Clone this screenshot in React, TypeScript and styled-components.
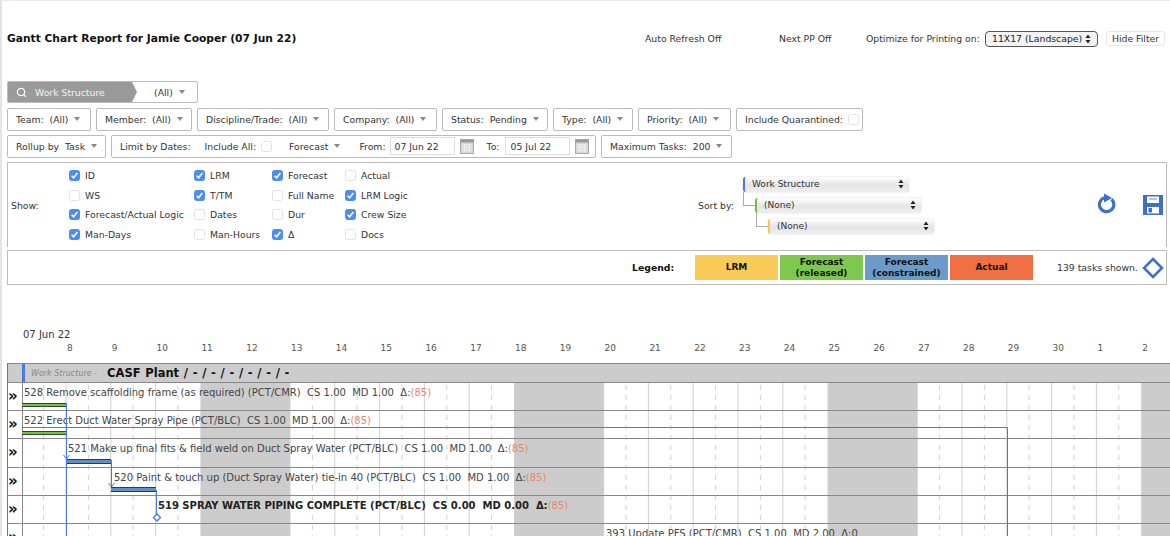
import React from "react";
import styled, { createGlobalStyle } from "styled-components";
import { Search } from "lucide-react";

const DAY = 44.8;
const GRID_START = 66;
const BLUE = "#4a7bdc";
const FONT = `"DejaVu Sans", Verdana, sans-serif`;

const GlobalStyle = createGlobalStyle`
	html, body {
		margin: 0;
		padding: 0;
		background: white;
		overflow: hidden;
	}
	body {
		font-family: ${FONT};
		font-size: 9.3px;
		color: #333;
	}
`;

const Page = styled.div`
	height: 536px;
	box-sizing: border-box;
	overflow: hidden;
	border-top: 1px solid #ece8f0;
	border-left: 2px solid #e4e4e4;
	padding-left: 5px;
	padding-right: 3px;
`;

const Header = styled.div`
	display: flex;
	align-items: center;
	height: 45px;
	margin-top: 15px;
	margin-bottom: 20px;
`;

const Title = styled.h1`
	margin: 0;
	width: 638px;
	font-size: 10.7px;
	font-weight: bold;
	color: #111;
	white-space: nowrap;
`;

const HeaderText = styled.span<{ $w: number }>`
	width: ${({ $w }) => $w}px;
	white-space: nowrap;
`;

const PrintSelect = styled.div`
	width: 113px;
	height: 16px;
	box-sizing: border-box;
	margin-right: 8px;
	padding: 0 6px;
	border: 1px solid #555;
	border-radius: 4px;
	background: #f3f3f3;
	display: flex;
	align-items: center;
	justify-content: space-between;
	color: #222;
`;

const HideFilter = styled.button`
	width: 59px;
	height: 15px;
	padding: 0;
	box-sizing: border-box;
	border: 1px solid #e6e6e6;
	border-radius: 3px;
	background: white;
	font: inherit;
	color: #333;
`;

const FilterRow = styled.div<{ $mb?: number }>`
	display: flex;
	gap: 5px;
	margin-bottom: ${({ $mb }) => $mb ?? 4}px;
`;

const Pill = styled.div<{ $w: number }>`
	width: ${({ $w }) => $w}px;
	height: 23px;
	flex: none;
	box-sizing: border-box;
	padding: 0 0 1px 8px;
	border: 1px solid #bbb;
	border-radius: 2px;
	display: flex;
	align-items: center;
	white-space: pre;
`;

const Caret = styled.span`
	margin-left: 6px;
	border-left: 3.5px solid transparent;
	border-right: 3.5px solid transparent;
	border-top: 4px solid #888;
`;

const StructurePill = styled(Pill)`
	height: 22px;
	padding: 0;
`;

const StructureTag = styled.div`
	width: 129px;
	height: 100%;
	margin-right: 17px;
	padding-left: 8px;
	box-sizing: border-box;
	background: #9a9a9a;
	color: #f2f2f2;
	display: flex;
	align-items: center;
	gap: 8px;
	clip-path: polygon(0 0, 124px 0, 100% 50%, 124px 100%, 0 100%);
`;

const CheckBox = styled.span<{ $on?: boolean }>`
	width: 11px;
	height: 11px;
	flex: none;
	box-sizing: border-box;
	border-radius: 2.5px;
	border: 1px solid ${({ $on }) => ($on ? "#4b8df0" : "#e2e2e2")};
	background: ${({ $on }) => ($on ? "#4b8df0" : "#fff")};
	display: flex;
	align-items: center;
	justify-content: center;
`;

const DateField = styled.div`
	width: 65px;
	height: 18px;
	flex: none;
	box-sizing: border-box;
	border: 1px solid #ddd;
	padding-left: 4px;
	display: flex;
	align-items: center;
`;

const CalendarArt = styled.svg`
	flex: none;
	margin: 0 13px 0 5px;
	&:last-child {
		margin-right: 0;
	}
`;

const Spaced = styled.span<{ $l?: number; $r?: number }>`
	margin-left: ${({ $l }) => $l ?? 0}px;
	margin-right: ${({ $r }) => $r ?? 0}px;
`;

const ShowPanel = styled.div`
	height: 85px;
	box-sizing: border-box;
	border: 1px solid #bbb;
	border-bottom: none;
	display: flex;
	align-items: center;
	padding-left: 3px;
`;

const ShowLabel = styled.span`
	width: 58px;
`;

const ShowGrid = styled.div`
	width: 362px;
	display: grid;
	grid-template-columns: 125px 78px 73px 86px;
	grid-auto-rows: 19.7px;
	align-items: center;
`;

const ShowItem = styled.label`
	display: flex;
	align-items: center;
	gap: 5px;
	white-space: nowrap;
`;

const SortArea = styled.div`
	margin-left: 267px;
	display: flex;
	align-items: center;
`;

const SortLabel = styled.span`
	width: 45px;
`;

const SortStack = styled.div`
	display: flex;
	flex-direction: column;
	gap: 6px;
	width: 192px;
`;

const SortSelect = styled.div<{ $indent: number; $color: string; $tree?: boolean }>`
	position: relative;
	margin-left: ${({ $indent }) => $indent}px;
	width: 166px;
	height: 15px;
	box-sizing: border-box;
	padding: 0 5px 0 7px;
	border-left: 2px solid ${({ $color }) => $color};
	border-radius: 3px;
	background: linear-gradient(#fff, #e4e4e4 55%, #efefef);
	box-shadow: 0 0 1px #888;
	font-size: 9px;
	display: flex;
	align-items: center;
	justify-content: space-between;
	&::before {
		display: ${({ $tree }) => ($tree ? "block" : "none")};
		content: "";
		position: absolute;
		left: -14px;
		top: -6px;
		width: 11px;
		height: 13px;
		border-left: 1px solid #aaa;
		border-bottom: 1px solid #aaa;
	}
`;

const SortIcons = styled.div`
	margin-left: 162px;
	display: flex;
	align-items: center;
	gap: 25px;
`;

const LegendPanel = styled.div`
	height: 35px;
	margin-top: 3px;
	box-sizing: border-box;
	border: 1px solid #bbb;
	display: flex;
	align-items: center;
	padding-left: 624px;
`;

const LegendTitle = styled.b`
	width: 63px;
	flex: none;
	color: #111;
`;

const Swatch = styled.div<{ $color: string }>`
	width: 83px;
	height: 25px;
	flex: none;
	margin-right: 2px;
	background: ${({ $color }) => $color};
	color: #111;
	font-weight: bold;
	font-size: 9px;
	line-height: 10.5px;
	text-align: center;
	display: flex;
	align-items: center;
	justify-content: center;
`;

const TaskCount = styled.span`
	margin-left: 22px;
	width: 84px;
	flex: none;
	white-space: nowrap;
`;

const Timeline = styled.div`
	margin-top: 43px;
	height: 35px;
	position: relative;
`;

const StartDate = styled.div`
	padding-left: 16px;
	height: 14px;
	line-height: 14px;
	font-size: 10px;
`;

const DayLabel = styled.span<{ $x: number }>`
	position: absolute;
	top: 15px;
	left: ${({ $x }) => $x}px;
	font-size: 9px;
	color: #555;
`;

const Chart = styled.div`
	position: relative;
	margin-right: -3px;
	border-left: 1px solid #777;
`;

const GroupRow = styled.div`
	height: 20px;
	box-sizing: border-box;
	background: #cccccc;
	border-top: 1px solid #888;
	border-bottom: 1px solid #888;
	display: flex;
	align-items: center;
	padding-left: 14px;
	position: relative;
	z-index: 2;
`;

const GroupMark = styled.span`
	width: 3px;
	height: 18px;
	background: ${BLUE};
	margin-right: 6px;
`;

const GroupTag = styled.i`
	font-size: 8px;
	color: #888;
	margin-right: 10px;
`;

const GroupTitle = styled.b`
	font-size: 11.5px;
	color: #111;
	word-spacing: 0.7px;
`;

const TaskRow = styled.div`
	height: 28.2px;
	box-sizing: border-box;
	position: relative;
	z-index: 1;
	border-bottom: 1px solid #888;
	display: flex;
`;

const Expand = styled.div`
	width: 14px;
	flex: none;
	box-sizing: content-box;
	border-right: 1px solid #888;
	background: white;
	font-size: 15px;
	font-weight: bold;
	color: #111;
	line-height: 27px;
	overflow: hidden;
`;

const TaskText = styled.div<{ $indent: number; $bold?: boolean }>`
	padding-left: ${({ $indent }) => $indent}px;
	padding-top: 3px;
	font-size: 10px;
	line-height: 14px;
	font-weight: ${({ $bold }) => ($bold ? "bold" : "normal")};
	color: ${({ $bold }) => ($bold ? "#222" : "#444")};
	white-space: pre;
`;

const Delta = styled.span`
	color: #e8866a;
	font-weight: normal;
`;

const Bar = styled.div<{ $x: number; $color: string; $border: string }>`
	position: absolute;
	left: ${({ $x }) => $x}px;
	bottom: 3px;
	width: 44.8px;
	height: 4.5px;
	box-sizing: border-box;
	border-top: 1px solid ${({ $border }) => $border};
	border-bottom: 0.5px solid ${({ $border }) => $border};
	background: ${({ $color }) => $color};
`;

const GridArt = styled.svg`
	position: absolute;
	left: -1px;
	top: 0;
	z-index: 0;
`;

const LinkArt = styled.svg`
	position: absolute;
	left: -1px;
	top: 0;
	z-index: 3;
	pointer-events: none;
`;

type Task = {
	text: string;
	delta: string;
	indent: number;
	bold?: boolean;
	bar?: { x: number; color: string; border: string };
};

const tasks: Task[] = [
	{
		text: "528 Remove scaffolding frame (as required) (PCT/CMR)  CS 1.00  MD 1.00  Δ:",
		delta: "(85)",
		indent: 1,
		bar: { x: 14, color: "#76c043", border: "#2f4a2a" },
	},
	{
		text: "522 Erect Duct Water Spray Pipe (PCT/BLC)  CS 1.00  MD 1.00  Δ:",
		delta: "(85)",
		indent: 1,
		bar: { x: 14, color: "#76c043", border: "#2f4a2a" },
	},
	{
		text: "521 Make up final fits & field weld on Duct Spray Water (PCT/BLC)  CS 1.00  MD 1.00  Δ:",
		delta: "(85)",
		indent: 45,
		bar: { x: 58, color: "#5f8fc4", border: "#2b3a52" },
	},
	{
		text: "520 Paint & touch up (Duct Spray Water) tie-in 40 (PCT/BLC)  CS 1.00  MD 1.00  Δ:",
		delta: "(85)",
		indent: 91,
		bar: { x: 103, color: "#5f8fc4", border: "#2b3a52" },
	},
	{
		text: "519 SPRAY WATER PIPING COMPLETE (PCT/BLC)  CS 0.00  MD 0.00  Δ:",
		delta: "(85)",
		indent: 135,
		bold: true,
	},
	{
		text: "393 Update PFS (PCT/CMR)  CS 1.00  MD 2.00  Δ:0",
		delta: "",
		indent: 583,
	},
];

const filters: [string, number][] = [
	["Team:  (All)", 84],
	["Member:  (All)", 96],
	["Discipline/Trade:  (All)", 132],
	["Company:  (All)", 103],
	["Status:  Pending", 106],
	["Type:  (All)", 80],
	["Priority:  (All)", 93],
];

const showOptions: [string, boolean][] = [
	["ID", true], ["LRM", true], ["Forecast", true], ["Actual", false],
	["WS", false], ["T/TM", true], ["Full Name", false], ["LRM Logic", true],
	["Forecast/Actual Logic", true], ["Dates", false], ["Dur", false], ["Crew Size", true],
	["Man-Days", true], ["Man-Hours", false], ["Δ", true], ["Docs", false],
];

const days = ["8", "9", "10", "11", "12", "13", "14", "15", "16", "17", "18", "19", "20", "21", "22", "23", "24", "25", "26", "27", "28", "29", "30", "1", "2"];

const Check = () => (
	<svg width="9" height="9" viewBox="0 0 9 9">
		<path d="M1.6 4.8 L3.6 6.8 L7.4 2" fill="none" stroke="white" strokeWidth="1.6" />
	</svg>
);

const Box = ({ on }: { on?: boolean }) => <CheckBox $on={on}>{on && <Check />}</CheckBox>;

const UpDown = () => (
	<svg width="6" height="10" viewBox="0 0 6 10">
		<path d="M3 0.5 L5.5 4 H0.5 Z M3 9.5 L5.5 6 H0.5 Z" fill="#222" />
	</svg>
);

const Calendar = () => (
	<CalendarArt width="14" height="15" viewBox="0 0 14 15">
		<rect x="0.5" y="0.5" width="13" height="14" fill="#d8d8d8" stroke="#aaa" />
		<rect x="0.5" y="0.5" width="13" height="3" fill="#999" />
		<path d="M2 6 H12 M2 8.5 H12 M2 11 H12 M4.5 5 V13 M7 5 V13 M9.5 5 V13" stroke="#f4f4f4" strokeWidth="0.8" />
	</CalendarArt>
);

const RefreshIcon = () => (
	<svg width="20" height="24" viewBox="0 0 20 24">
		<path d="M14.5 6.2 A7.2 7.2 0 1 1 7 4.8" fill="none" stroke="#3f6fc9" strokeWidth="3.2" />
		<path d="M7 0.5 L15 5 L7 9.5 Z" fill="#3f6fc9" />
	</svg>
);

const SaveIcon = () => (
	<svg width="22" height="22" viewBox="0 0 22 22">
		<path fillRule="evenodd" d="M1 1 H21 V21 H1 Z M5 2.5 V9 H17 V2.5 Z M5 13 V19.5 H17 V13 Z" fill="#3f6fc9" />
		<path d="M6.5 14 H10 V18.5 H6.5 Z" fill="#3f6fc9" />
		<path d="M7 5 H15" stroke="#7d9edb" strokeWidth="1.2" />
	</svg>
);

const DiamondIcon = () => (
	<svg width="24" height="24" viewBox="0 0 24 24">
		<path d="M12 3 L21 12 L12 21 L3 12 Z" fill="none" stroke="#3f6fc9" strokeWidth="2.6" />
	</svg>
);

// background of the chart: weekend bands, day lines and half day dashes
const ChartGrid = () => {
	const lines = [];
	for (let i = -1; i < 26; i++) {
		const x = GRID_START + DAY * i;
		const weekday = ((i % 7) + 7) % 7;
		if (weekday === 3) lines.push(<rect key={`w${i}`} x={x} y={383} width={DAY * 2} height={160} fill="#cccccc" />);
		if (weekday === 3 || weekday === 4) continue;
		lines.push(<line key={`s${i}`} x1={x} x2={x} y1={383} y2={543} stroke="#d0d0d0" strokeWidth="1" />);
		lines.push(<line key={`d${i}`} x1={x + DAY / 2} x2={x + DAY / 2} y1={385} y2={543} stroke="#d0d0d0" strokeWidth="1" strokeDasharray="5 5" />);
	}
	return (
		<GridArt width="1164" height="180" viewBox="7 363 1164 180">
			{lines}
		</GridArt>
	);
};

const ChartLinks = () => (
	<LinkArt width="1164" height="180" viewBox="7 363 1164 180">
		<g fill="none" stroke={BLUE} strokeWidth="1">
			<path d="M66.5 403 V543" />
			<path d="M22 427.5 H1007.5 V543" />
			<path d="M111.5 460 V487" />
			<path d="M156.5 490 V514" />
			<path d="M63.5 455 L66.5 459 L69.5 455" />
			<path d="M108.5 483 L111.5 487 L114.5 483" />
			<path d="M157 514 L160.5 517.5 L157 521 L153.5 517.5 Z" strokeWidth="1.4" fill="white" />
		</g>
	</LinkArt>
);

export default function App() {
	return (
		<>
			<GlobalStyle />
			<Page>
				<Header>
					<Title>Gantt Chart Report for Jamie Cooper (07 Jun 22)</Title>
					<HeaderText $w={134}>Auto Refresh Off</HeaderText>
					<HeaderText $w={87}>Next PP Off</HeaderText>
					<HeaderText $w={119}>Optimize for Printing on:</HeaderText>
					<PrintSelect>
						11X17 (Landscape) <UpDown />
					</PrintSelect>
					<HideFilter>Hide Filter</HideFilter>
				</Header>

				<FilterRow $mb={5}>
					<StructurePill $w={191}>
						<StructureTag>
							<Search size={11} strokeWidth={2.6} color="white" />
							Work Structure
						</StructureTag>
						(All)
						<Caret />
					</StructurePill>
				</FilterRow>

				<FilterRow>
					{filters.map(([label, w]) => (
						<Pill key={label} $w={w}>
							{label}
							<Caret />
						</Pill>
					))}
					<Pill $w={127}>
						Include Quarantined:
						<Spaced $l={5}>
							<Box />
						</Spaced>
					</Pill>
				</FilterRow>

				<FilterRow>
					<Pill $w={99}>
						Rollup by  Task
						<Caret />
					</Pill>
					<Pill $w={485}>
						Limit by Dates:
						<Spaced $l={14}>Include All:</Spaced>
						<Spaced $l={5} $r={17}>
							<Box />
						</Spaced>
						Forecast
						<Caret />
						<Spaced $l={19} $r={4}>From:</Spaced>
						<DateField>07 Jun 22</DateField>
						<Calendar />
						<Spaced $r={6}>To:</Spaced>
						<DateField>05 Jul 22</DateField>
						<Calendar />
					</Pill>
					<Pill $w={131}>
						Maximum Tasks:  200
						<Caret />
					</Pill>
				</FilterRow>

				<ShowPanel>
					<ShowLabel>Show:</ShowLabel>
					<ShowGrid>
						{showOptions.map(([label, on]) => (
							<ShowItem key={label}>
								<Box on={on} />
								{label}
							</ShowItem>
						))}
					</ShowGrid>
					<SortArea>
						<SortLabel>Sort by:</SortLabel>
						<SortStack>
							<SortSelect $indent={0} $color="#4a78cf">
								Work Structure <UpDown />
							</SortSelect>
							<SortSelect $indent={12} $color="#76c043" $tree>
								(None) <UpDown />
							</SortSelect>
							<SortSelect $indent={25} $color="#f8cb58" $tree>
								(None) <UpDown />
							</SortSelect>
						</SortStack>
					</SortArea>
					<SortIcons>
						<RefreshIcon />
						<SaveIcon />
					</SortIcons>
				</ShowPanel>

				<LegendPanel>
					<LegendTitle>Legend:</LegendTitle>
					<Swatch $color="#f8cb58">LRM</Swatch>
					<Swatch $color="#7ec850">
						Forecast
						<br />
						(released)
					</Swatch>
					<Swatch $color="#6c9ac9">
						Forecast
						<br />
						(constrained)
					</Swatch>
					<Swatch $color="#f06f43">Actual</Swatch>
					<TaskCount>139 tasks shown.</TaskCount>
					<DiamondIcon />
				</LegendPanel>

				<Timeline>
					<StartDate>07 Jun 22</StartDate>
					{days.map((d, i) => (
						<DayLabel key={d + i} $x={GRID_START + DAY * i - 6}>
							{d}
						</DayLabel>
					))}
				</Timeline>

				<Chart>
					<ChartGrid />
					<GroupRow>
						<GroupMark />
						<GroupTag>Work Structure -</GroupTag>
						<GroupTitle>CASF Plant / - / - / - / - / - / -</GroupTitle>
					</GroupRow>
					{tasks.map(t => (
						<TaskRow key={t.text}>
							<Expand>»</Expand>
							<TaskText $indent={t.indent} $bold={t.bold}>
								{t.text}
								{t.delta && <Delta>{t.delta}</Delta>}
							</TaskText>
							{t.bar && <Bar $x={t.bar.x} $color={t.bar.color} $border={t.bar.border} />}
						</TaskRow>
					))}
					<ChartLinks />
				</Chart>
			</Page>
		</>
	);
}
